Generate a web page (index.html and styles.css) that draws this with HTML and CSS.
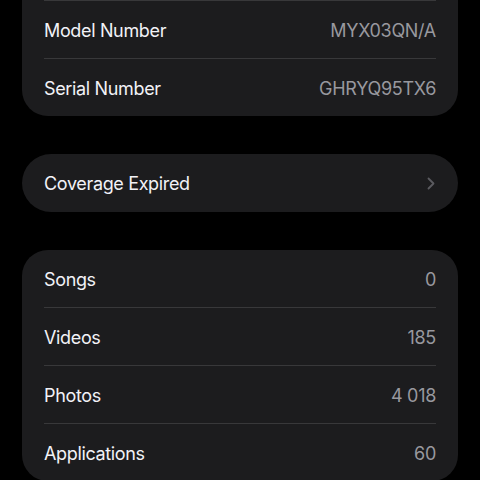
FILE: index.html
```html
<!DOCTYPE html>
<html lang="en">
<head>
    <meta charset="UTF-8">
    <meta name="viewport" content="width=device-width, initial-scale=1.0">
    <title>About</title>
    <link rel="stylesheet" href="styles.css">
</head>
<body>
    <div class="page">
        <div class="group group-top">
            <div class="row">
                <span class="label">Model Number</span>
                <span class="value">MYX03QN/A</span>
            </div>
            <div class="row">
                <span class="label">Serial Number</span>
                <span class="value">GHRYQ95TX6</span>
            </div>
        </div>

        <div class="group pill">
            <div class="row">
                <span class="label">Coverage Expired</span>
                <svg class="chevron" width="8" height="13" viewBox="0 0 8 13">
                    <path d="M1.5 1.5 L6.5 6.5 L1.5 11.5" fill="none" stroke="#5b5b60" stroke-width="1.8" stroke-linecap="round" stroke-linejoin="round"/>
                </svg>
            </div>
        </div>

        <div class="group">
            <div class="row">
                <span class="label">Songs</span>
                <span class="value">0</span>
            </div>
            <div class="row">
                <span class="label">Videos</span>
                <span class="value">185</span>
            </div>
            <div class="row">
                <span class="label">Photos</span>
                <span class="value">4 018</span>
            </div>
            <div class="row">
                <span class="label">Applications</span>
                <span class="value">60</span>
            </div>
        </div>
    </div>
</body>
</html>
```

FILE: styles.css
```css
html, body {
    margin: 0;
    padding: 0;
    background: #000;
    height: 100%;
    overflow: hidden;
}
body {
    font-family: Inter, "Noto Sans", sans-serif;
    -webkit-font-smoothing: antialiased;
}
.page {
    display: flex;
    flex-direction: column;
    gap: 38px;
    padding: 0 22px;
    margin-top: -58px;
}
.group {
    background: #1c1c1e;
    border-radius: 26px;
    padding: 0 22px;
}
.group-top {
    border-radius: 0 0 26px 26px;
    padding-top: 58px;
}
.group-top .row:first-child {
    border-top: 1px solid #38383a;
}
.pill { border-radius: 29px; }
.pill .row { height: 58px; }
.row {
    display: flex;
    align-items: center;
    justify-content: space-between;
    height: 57px;
    padding-top: 1px;
    box-sizing: border-box;
}
.row + .row { border-top: 1px solid #38383a; height: 58px; }
.group-top .row:first-child { height: 58px; }
.label {
    color: #f2f2f7;
    font-size: 18px;
    letter-spacing: -0.35px;
}
.value {
    color: #98989e;
    font-size: 18px;
    letter-spacing: -0.3px;
}
.chevron { margin-right: 1px; }
```
